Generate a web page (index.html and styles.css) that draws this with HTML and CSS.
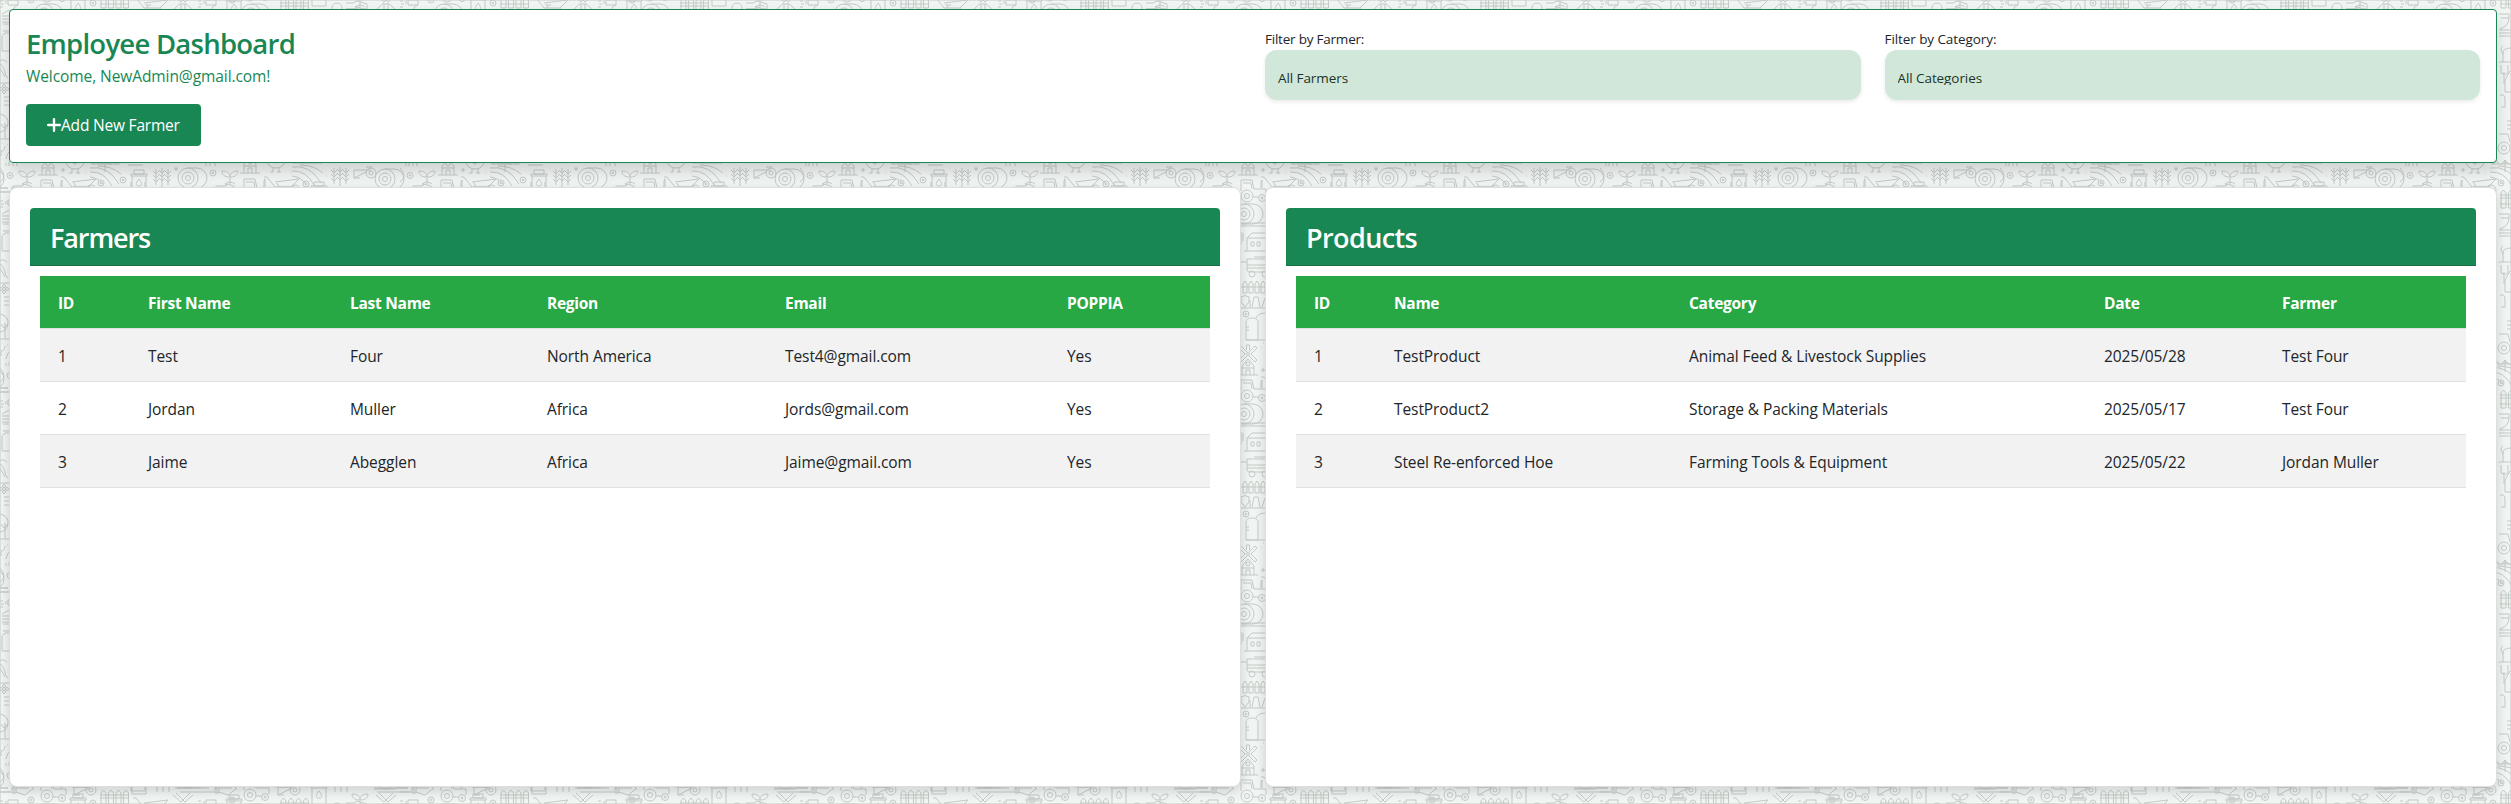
FILE: index.html
```
<!DOCTYPE html>
<html lang="en">
<head>
<meta charset="utf-8">
<title>Employee Dashboard</title>
<link rel="stylesheet" href="styles.css">
</head>
<body>
<svg class="backdrop" aria-hidden="true">
  <defs>
    <g id="plus"><circle r="3"/><path d="M-1.3 0h2.6M0-1.3v2.6"/></g>
    <g id="sprout"><path d="M0 12V5C0 1-3-1-8-1-8 3-5 5-1 5M0 5C0 1 3-1 8-1 8 3 5 5 1 5M-5 12q5-4 10 0M-14 17v-3h9l3-2M-5 12c5 0 9 2 12 5"/></g>
    <g id="mill"><path d="M-10 21H10M-6 21V12L0 5l6 7v9M-6 14H6M-2 21v-5h4v5M-1-2l-6-6-2 2 6 6M1-2l6-6 2 2-6 6M-1 2l-6 6-2-2 6-6M1 2l6 6 2-2-6-6M-1.500-4v-5h3v5"/><circle r="1.500"/><circle cy="10" r="2"/></g>
    <g id="tractor"><circle r="6"/><circle r="2.500"/><circle cx="15" cy="2" r="3.500"/><circle cx="15" cy="2" r="1"/><path d="M-6-5v-11H5l2 9h12v6M-4-13h8l1 6M6 1h5M14-8v-6l1-2v8"/></g>
    <g id="roll"><circle r="10"/><circle r="6"/><circle r="2.500"/><path d="M0-10H9A10 10 0 0 1 9 10H-11"/></g>
    <g id="hen"><path d="M-9-3q1 8 9 8t9-8M-3 5v4M3 5v4M-6 9h3M1 9h4M-3-2q3 4 6 0"/></g>
    <g id="hills"><path d="M0 4q18-3 29 16M0 8q14-1 22 14M0 13q9 1 14 8M8 2q14 0 23 8M1 0h29M3 0l3-4 3 4M12 0l3-4 3 4M21 0l3-4 3 4"/></g>
    <g id="barrow"><path d="M0 0h3l8 10h16L35 2 11 5M13 6l2 4M27 10v3"/></g>
    <g id="jar"><path d="M-5-9H5v4H-5zM-8-5H8v2H-8zM-7-3V15H7V-3M0 0c-4 5-3 7 0 7s4-2 0-7"/></g>
    <g id="wheat"><path d="M-6 16V0M0 18V-1M6 16V0M-9 2l3 3 3-3M-9 6l3 3 3-3M-9 10l3 3 3-3M-3 1l3 3 3-3M-3 5l3 3 3-3M-3 9l3 3 3-3M3 2l3 3 3-3M3 6l3 3 3-3M3 10l3 3 3-3"/></g>
    <g id="fence"><path d="M0 18V3l2.500-3L5 3v15zM7.500 18V3L10 0l2.500 3v15zM15 18V3l2.500-3L20 3v15zM22.500 18V3L25 0l2.500 3v15zM-1 5h29M-1 8h29M-1 14h29"/></g>
    <g id="reel"><path d="M0 0v8L12 2M0 0h17M0 8h6"/><circle cx="17" cy="3" r="5"/><circle cx="17" cy="3" r="2"/></g>
    <g id="brush"><path d="M0 0v6h4V0M2 0v6M4 5l9 3 9-7M4 1h13"/></g>
    <g id="blades"><path d="M-10-5l8 7 2-2-7-7M10-5L2 2 0 0l7-7M-9 9l7-6M9 9L2 3M-2 9V4h4v5"/></g>
    <g id="tap"><path d="M0 0h3M1 3h3M0 6h3M8-1h10v5H8zM6 0v3M18 4q-3 0-5 5"/></g>
    <g id="motifs">
      <use href="#plus" x="10" y="175.500"/><use href="#plus" x="101" y="183"/><use href="#plus" x="123" y="180"/>
      <use href="#plus" x="213" y="173"/><use href="#plus" x="306" y="184"/><use href="#plus" x="46" y="114"/>
      <use href="#plus" x="93" y="203"/><use href="#plus" x="31" y="200"/><use href="#plus" x="232" y="200"/>
      <use href="#sprout" x="27" y="172"/><use href="#sprout" x="230" y="172"/><use href="#sprout" x="360" y="195"/>
      <use href="#mill" x="48" y="154"/><use href="#mill" x="250" y="152"/>
      <use href="#tractor" x="47" y="196"/><use href="#tractor" x="250" y="195"/>
      <use href="#roll" x="44" y="14"/><use href="#roll" x="251" y="14"/><use href="#roll" x="188" y="178"/><use href="#roll" x="385" y="179"/>
      <use href="#hen" x="75" y="164"/><use href="#hen" x="276" y="163"/>
      <use href="#hills" x="90" y="164"/><use href="#hills" x="292" y="163"/>
      <use href="#barrow" x="61" y="177"/><use href="#barrow" x="264" y="177"/><use href="#barrow" x="133" y="198"/>
      <use href="#jar" x="139" y="179"/><use href="#jar" x="319" y="191"/><use href="#jar" x="78" y="203"/><use href="#jar" x="234" y="204"/>
      <use href="#wheat" x="162" y="169"/><use href="#wheat" x="340" y="168"/>
      <use href="#fence" x="101" y="190"/><use href="#fence" x="281" y="198"/>
      <use href="#reel" x="74" y="187"/><use href="#reel" x="278" y="187"/><use href="#reel" x="354" y="170"/>
      <use href="#brush" x="12" y="187"/><use href="#brush" x="215" y="187"/>
      <use href="#blades" x="183" y="200"/><use href="#blades" x="386" y="200"/>
      <use href="#tap" x="198" y="201"/><use href="#tap" x="0" y="201"/>
      <path d="M175 188h34M180 192h34M374 188h34M377 192h34M-26 188H8M-23 192h34M131 182v9h14v-9M157 187v5M163 187v5M169 187v5M335 187v5M341 187v5M347 187v5M6 163v3M9 162v4M13 163v3M17 163v3M206 163v3M210 162v4M215 163v3M127 162h16M128 165h15"/>
      <path d="M346 203h7l4-2 10 3v5h-21M332 209q0-6 5-6t5 6"/>
      <path d="M40 23h26M40 26h26M41 32v12M43 33v8M47 51V38l5-5h14M47 38h19M44 51h22M51 42h3v4h-3zM57 42h3v4h-3z"/>
      <path d="M40 62h7v-3h18M47 62v8q0 2 3 2h15M47 65h18M47 68h18M54 57h11"/><circle cx="52" cy="74" r="3"/><circle cx="65" cy="74" r="3"/>
      <path d="M43 93V84l2-3 2 3v9zM49 93V84l2-3 2 3v9zM55 93V84l2-3 2 3v9zM61 93V84l2-3 2 3v9zM41 87h25"/>
      <path d="M41 97q4-3 8 0v5l-4 5-4-5zM52 107l2-10h4l2 10M62 107l3-9M50 107v-7M40 108h26"/>
      <path d="M46 140v-18q0-4 6-4t6 4v18zM56 118q2-5 10-5M46 127h3M46 130h3M46 140h20"/>
      <path d="M2 14l7-4M2 16h8M2 19h8M2 22h8M3 24h7V10M3 31h7M2 51V36l3-3h6M2 51h8M0 60q4-1 7 2M0 64c6 3 4 12 8 14M0 68l5 9M0 83h9M4 97h6M4 101h6M4 105h6M0 139h9M5 123v16M1 124l3 4 4-4M0 114q9 2 8 10-2 8-8 8M1 156v-5q4 0 4-5M6 159q2-9 6-8M0 182q8-5 0-14"/>
      <circle cx="4" cy="89" r="1.500"/><circle cx="4" cy="86" r="1.500"/><circle cx="4" cy="92" r="1.500"/><circle cx="1" cy="89" r="1.500"/><circle cx="7" cy="89" r="1.500"/>
      <path d="M99 14h10v4h-8M109 18q0 8-9 11M99 30h14M99 33h14M99 36h14M99 62h12M103 62v-9q0-5 8-5M103 54q-4-6 0-8M101 65v8q4 3 7 0v-8M104 72v12M110 71l-5 9v12h8M100 95q5-1 5 4v8h-4M107 121h5v8h-5M107 125h5M99 134h9l2 8M101 165q5-6 9 0M105 160v12"/>
      <circle cx="104" cy="148" r="6"/><circle cx="104" cy="148" r="2.500"/>
      <path d="M63 168v4M61 170h4M176 167v4M174 169h4M85 173h.8M149 168h.8M290 172h.8M326 176h.8M366 167h6M2 143h.8M7 145h.8M63 143h.8M61 147h.8M147 205h4"/>
    </g>
    <pattern id="farm" width="400" height="200" patternUnits="userSpaceOnUse">
      <use href="#motifs"/><use href="#motifs" y="-200"/><use href="#motifs" x="-400"/><use href="#motifs" x="-400" y="-200"/>
    </pattern>
  </defs>
  <rect width="100%" height="100%" fill="url(#farm)"/>
</svg>

<main class="page">
  <header class="banner">
    <div class="intro">
      <h1 class="title">Employee Dashboard</h1>
      <p class="welcome">Welcome, NewAdmin@gmail.com!</p>
      <button class="add" type="button"><svg class="add-icon" viewBox="0 0 14 14"><path d="M7 1.200v11.600M1.200 7h11.600"/></svg><span>Add New Farmer</span></button>
    </div>
    <div class="filters">
      <div class="filter"><span class="filter-label farmer-label">Filter by Farmer:</span><div class="select"><span class="select-value">All Farmers</span></div></div>
      <div class="filter"><span class="filter-label">Filter by Category:</span><div class="select"><span class="select-value">All Categories</span></div></div>
    </div>
  </header>

  <div class="panels">
    <section class="panel">
      <h2 class="panel-title farmers-title">Farmers</h2>
      <table class="grid farmers">
        <colgroup><col class="f-id"><col class="f-first"><col class="f-last"><col class="f-region"><col class="f-email"><col></colgroup>
        <thead><tr><th>ID</th><th>First Name</th><th>Last Name</th><th>Region</th><th>Email</th><th>POPPIA</th></tr></thead>
        <tbody>
          <tr><td>1</td><td>Test</td><td>Four</td><td>North America</td><td>Test4@gmail.com</td><td>Yes</td></tr>
          <tr><td>2</td><td>Jordan</td><td>Muller</td><td>Africa</td><td>Jords@gmail.com</td><td>Yes</td></tr>
          <tr><td>3</td><td>Jaime</td><td>Abegglen</td><td>Africa</td><td>Jaime@gmail.com</td><td>Yes</td></tr>
        </tbody>
      </table>
    </section>
    <section class="panel">
      <h2 class="panel-title">Products</h2>
      <table class="grid products">
        <colgroup><col class="p-id"><col class="p-name"><col class="p-category"><col class="p-date"><col></colgroup>
        <thead><tr><th>ID</th><th>Name</th><th>Category</th><th>Date</th><th>Farmer</th></tr></thead>
        <tbody>
          <tr><td>1</td><td>TestProduct</td><td>Animal Feed &amp; Livestock Supplies</td><td>2025/05/28</td><td>Test Four</td></tr>
          <tr><td>2</td><td>TestProduct2</td><td>Storage &amp; Packing Materials</td><td>2025/05/17</td><td>Test Four</td></tr>
          <tr><td>3</td><td>Steel Re-enforced Hoe</td><td>Farming Tools &amp; Equipment</td><td>2025/05/22</td><td>Jordan Muller</td></tr>
        </tbody>
      </table>
    </section>
  </div>
</main>
</body>
</html>
```
FILE: styles.css
```
* { box-sizing: border-box; }
body {
  margin: 0;
  height: 804px;
  overflow: hidden;
  background: #f1f5f3;
  color: #212529;
  font: 15.5px/24px "Open Sans", "Noto Sans", sans-serif;
  letter-spacing: -.08px;
}
.backdrop {
  position: absolute;
  inset: 0;
  width: 100%;
  height: 100%;
  z-index: -1;
  fill: none;
  stroke: #c5cbc7;
  stroke-width: 1;
}
.page { padding: 9px 14px 0 9px; }
.banner {
  display: flex;
  height: 154px;
  padding: 16px;
  border: 1px solid #198754;
  border-radius: 4px;
  background: #fff;
  box-shadow: 0 8px 16px rgba(0, 0, 0, .15);
}
.intro { flex: 0 0 1239px; color: #198754; }
.title { margin: 1px 0 0; font-size: 27.5px; line-height: 34px; font-weight: 600; letter-spacing: -.75px; }
.welcome { margin: 3px 0 0; line-height: 24px; }
.add {
  display: flex;
  align-items: center;
  width: 175px;
  height: 42px;
  margin-top: 16px;
  padding: 0 21px;
  border: 0;
  border-radius: 4px;
  background: #198754;
  color: #fff;
  font: inherit;
  font-weight: 500;
  letter-spacing: -.2px;
  white-space: nowrap;
}
.add-icon { flex: 0 0 14px; height: 14px; fill: none; stroke: #fff; stroke-width: 2.400; stroke-linecap: round; }
.filters { flex: 1; display: flex; gap: 24px; }
.filter { flex: 1; }
.filter-label { display: block; height: 24px; line-height: 26px; font-size: 13.5px; color: #212529; }
.farmer-label { letter-spacing: -.22px; }
.select {
  height: 50px;
  padding: 20px 13px 0;
  border-radius: 12px;
  background: #d1e7d9;
  box-shadow: 0 2px 4px rgba(0, 0, 0, .08);
  font-size: 13.5px;
}
/* one-line value box, its lower edge just under the baseline */
.select-value { display: block; height: 15px; line-height: 17px; overflow: hidden; color: #1c3327; }
.panels { display: flex; gap: 24px; margin-top: 24px; }
.panel {
  flex: 1;
  height: 600px;
  padding: 20px;
  border: 1px solid #dedede;
  border-radius: 8px;
  background: #fff;
  box-shadow: 0 4px 12px rgba(0, 0, 0, .15);
}
.panel-title {
  height: 58px;
  margin: 0 0 10px;
  padding: 0 20px;
  border-bottom: 1px solid #177245;
  border-radius: 4px 4px 0 0;
  background: #198754;
  color: #fff;
  font-size: 27px;
  line-height: 60px;
  font-weight: 600;
  letter-spacing: -.6px;
}
.farmers-title { letter-spacing: -1.1px; }
.grid { width: 1170px; margin: 0 10px; border-collapse: separate; border-spacing: 0; table-layout: fixed; }
.grid th, .grid td { height: 53px; padding: 1px 0 0 18px; border-bottom: 1px solid #dee2e6; text-align: left; white-space: nowrap; }
.grid th { background: #28a745; color: #fff; font-weight: 700; letter-spacing: -.27px; }
.grid tbody tr:nth-child(odd) { background: #f2f2f2; }
.f-id { width: 90px; }
.f-first { width: 202px; }
.f-last { width: 197px; }
.f-region { width: 238px; }
.f-email { width: 282px; }
.p-id { width: 80px; }
.p-name { width: 295px; }
.p-category { width: 415px; }
.p-date { width: 178px; }
```
